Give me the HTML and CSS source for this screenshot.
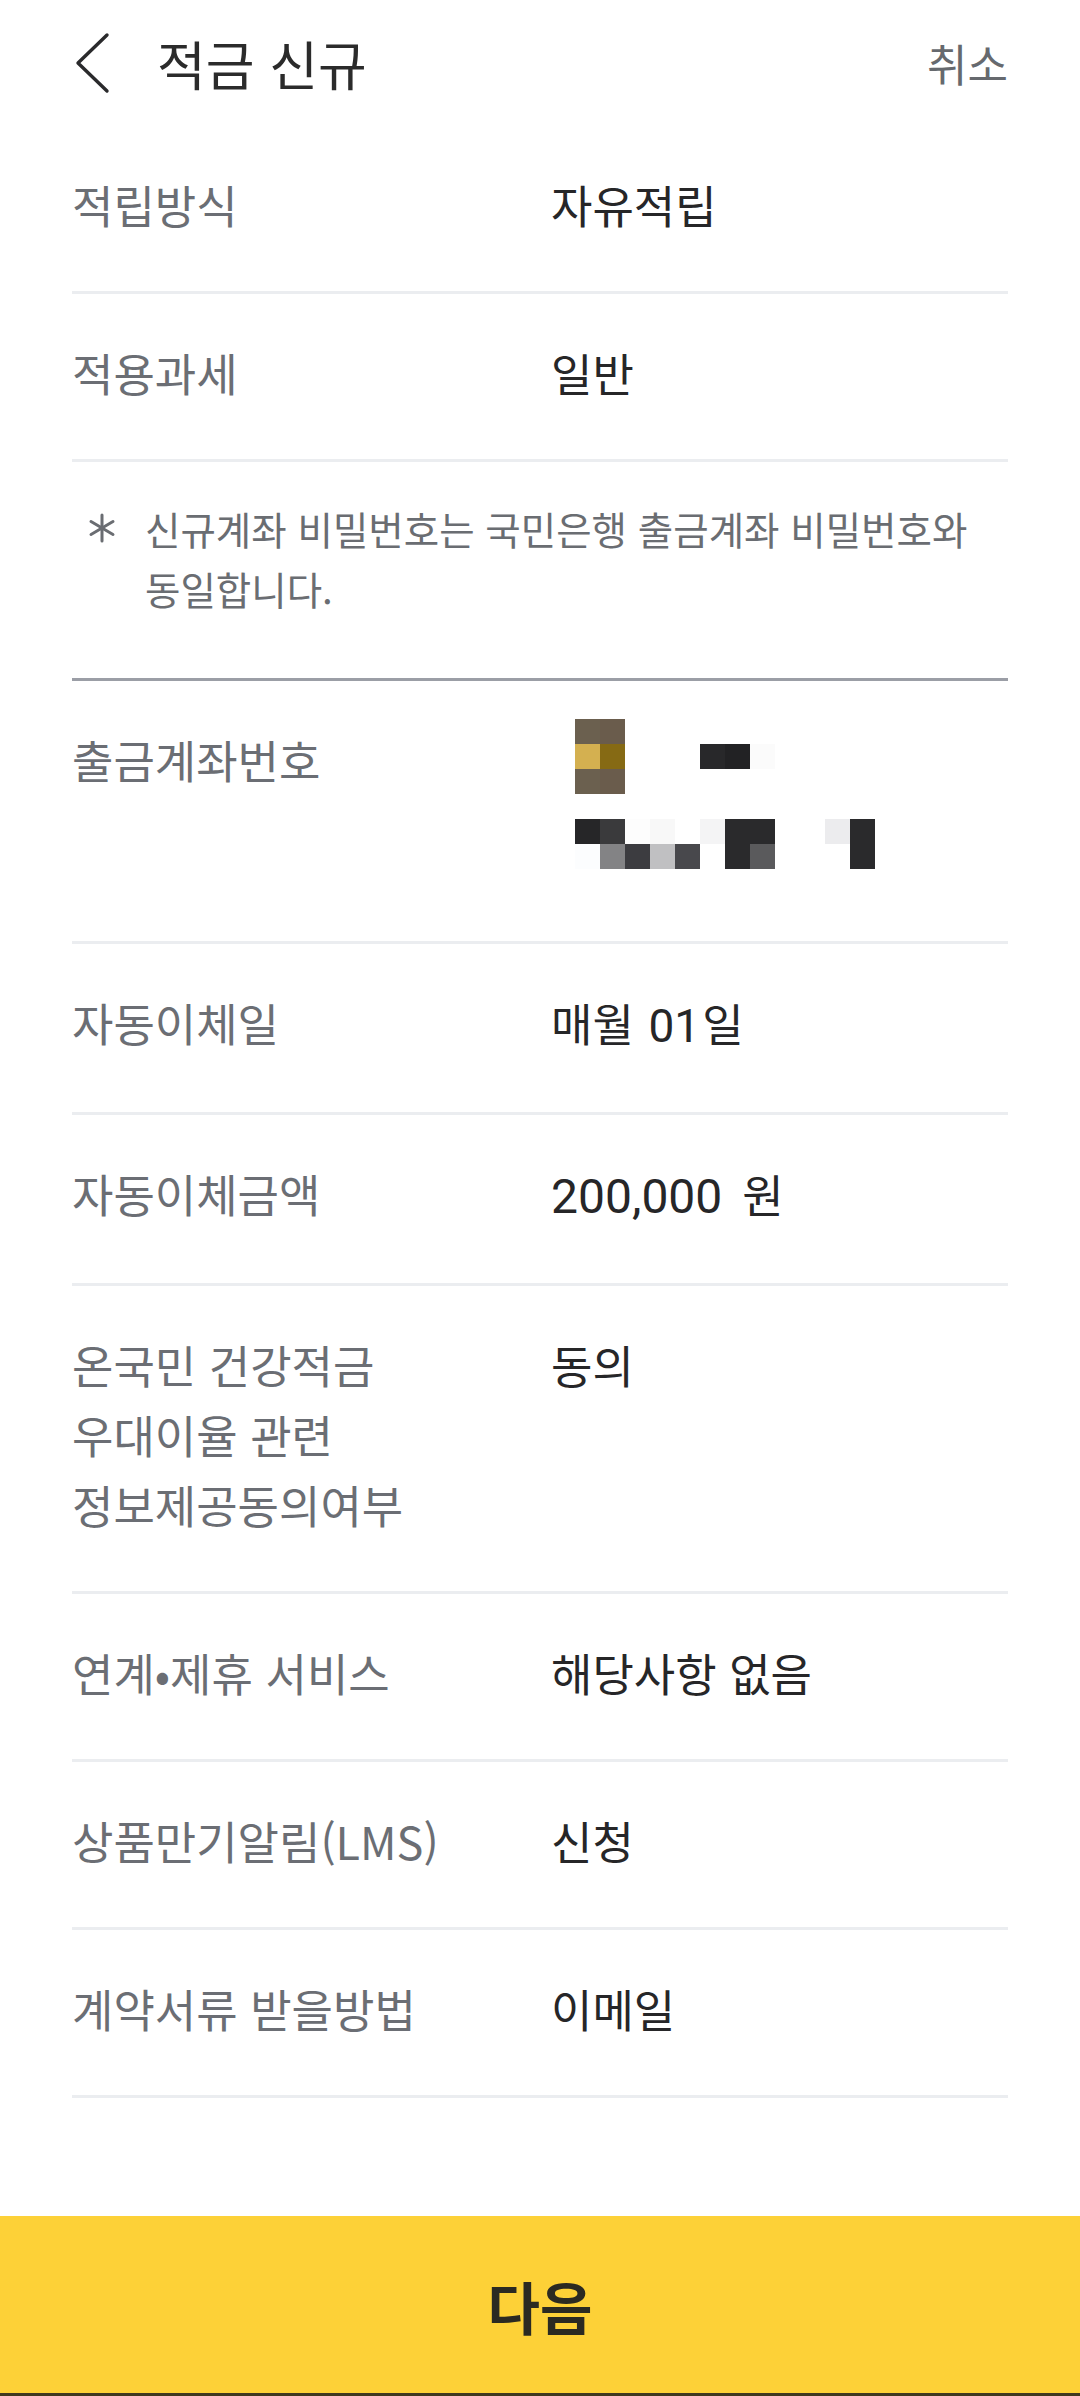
FILE: index.html
```html
<!DOCTYPE html>
<html lang="ko">
<head>
    <meta charset="UTF-8">
    <meta name="viewport" content="width=device-width, initial-scale=1.0">
    <title>적금 신규</title>
    <link rel="stylesheet" href="styles.css">
</head>
<body>
    <div class="screen">
        <!-- 상단 헤더 -->
        <div class="header">
            <svg class="back" width="36" height="62" viewBox="0 0 36 62">
                <polyline points="32,3 3,31 32,59" fill="none" stroke="#2a2a2c" stroke-width="3.4" stroke-linecap="round" stroke-linejoin="round"/>
            </svg>
            <h1 class="title">적금 신규</h1>
            <span class="cancel">취소</span>
        </div>

        <div class="content">
            <div class="row">
                <div class="label">적립방식</div>
                <div class="value">자유적립</div>
            </div>
            <div class="row">
                <div class="label">적용과세</div>
                <div class="value">일반</div>
            </div>

            <!-- 안내 문구 -->
            <div class="notice">
                <span class="star">
                    <svg width="28" height="30" viewBox="0 0 28 30">
                        <g stroke="#6a6d72" stroke-width="3" stroke-linecap="round">
                            <line x1="14" y1="2" x2="14" y2="28"/>
                            <line x1="3" y1="8.5" x2="25" y2="21.5"/>
                            <line x1="3" y1="21.5" x2="25" y2="8.5"/>
                        </g>
                    </svg>
                </span>
                <p>신규계좌 비밀번호는 국민은행 출금계좌 비밀번호와 동일합니다.</p>
            </div>

            <div class="row">
                <div class="label">출금계좌번호</div>
                <div class="value">
                    <!-- 계좌번호 모자이크 -->
                    <div class="mosaic">
                        <div class="mrow"><i style="background:#6b604f"></i><i style="background:#6a5c4c"></i></div>
                        <div class="mrow"><i style="background:#d4b050"></i><i style="background:#866a14"></i><i></i><i></i><i></i><i style="background:#28282a"></i><i style="background:#222224"></i><i style="background:#fbfbfb"></i></div>
                        <div class="mrow"><i style="background:#6b604f"></i><i style="background:#6a5c4c"></i></div>
                        <div class="mrow"></div>
                        <div class="mrow"><i style="background:#262628"></i><i style="background:#3a3a3c"></i><i style="background:#fdfdfd"></i><i style="background:#f8f8f8"></i><i></i><i style="background:#f4f4f5"></i><i style="background:#2a2a2c"></i><i style="background:#2a2a2c"></i><i></i><i></i><i style="background:#ececee"></i><i style="background:#2a2a2c"></i></div>
                        <div class="mrow"><i style="background:#fcfdfe"></i><i style="background:#838385"></i><i style="background:#3c3c40"></i><i style="background:#c0c0c2"></i><i style="background:#48484c"></i><i></i><i style="background:#2a2a2c"></i><i style="background:#5a5a5c"></i><i></i><i></i><i></i><i style="background:#2a2a2c"></i></div>
                    </div>
                </div>
            </div>
            <div class="row">
                <div class="label">자동이체일</div>
                <div class="value">매월 <span class="num">01</span>일</div>
            </div>
            <div class="row">
                <div class="label">자동이체금액</div>
                <div class="value"><span class="amount">200,000</span><span class="won">원</span></div>
            </div>
            <div class="row">
                <div class="label">온국민 건강적금<br>우대이율 관련<br>정보제공동의여부</div>
                <div class="value">동의</div>
            </div>
            <div class="row">
                <div class="label">연계•제휴 서비스</div>
                <div class="value">해당사항 없음</div>
            </div>
            <div class="row">
                <div class="label">상품만기알림(LMS)</div>
                <div class="value">신청</div>
            </div>
            <div class="row">
                <div class="label">계약서류 받을방법</div>
                <div class="value">이메일</div>
            </div>
        </div>

        <button class="next-btn">다음</button>
    </div>
</body>
</html>
```

FILE: styles.css
```css
html, body {
    margin: 0;
    padding: 0;
    background: #fff;
}
body {
    font-family: "Noto Sans CJK KR", "Noto Sans", sans-serif;
    color: #262628;
}
.screen {
    min-height: 100vh;
    display: flex;
    flex-direction: column;
}

/* 헤더 */
.header {
    height: 126px;
    display: flex;
    align-items: center;
    padding: 0 72px;
}
.back {
    margin-left: 3px;
    flex-shrink: 0;
}
.title {
    margin: 0 0 0 46px;
    font-size: 53px;
    font-weight: 400;
    line-height: 1;
    color: #2b2b2b;
    flex: 1;
}
.cancel {
    font-size: 44px;
    line-height: 1;
    color: #66696e;
}

/* 항목 목록 */
.content {
    padding: 0 72px;
}
.row {
    display: flex;
    padding: 44px 0 51px;
    border-bottom: 3px solid #ebedf0;
    font-size: 45px;
    line-height: 70px;
}
.label {
    width: 479px;
    flex-shrink: 0;
    color: #6b6e74;
}
.value {
    color: #262628;
}
.num {
    font-family: Roboto, "Noto Sans", sans-serif;
    font-size: 46px;
    margin: 0 2px;
}
.amount {
    font-family: Roboto, "Noto Sans", sans-serif;
    font-size: 48px;
}
.won {
    margin-left: 20px;
}

/* 안내 문구 */
.notice {
    display: flex;
    padding: 36px 0 60px 16px;
    border-bottom: 3px solid #9b9ea6;
    font-size: 38.5px;
    line-height: 60px;
    color: #6a6d72;
}
.star {
    height: 60px;
    display: flex;
    align-items: center;
    margin-right: 29px;
    flex-shrink: 0;
}
.notice p {
    margin: 0;
    word-break: keep-all;
}

/* 모자이크 */
.mosaic {
    margin: -6px 0 21px 24px;
}
.mrow {
    display: flex;
    height: 25px;
}
.mrow i {
    display: block;
    width: 25px;
    height: 25px;
}

/* 다음 버튼 */
.next-btn {
    margin-top: auto;
    height: 180px;
    width: 100%;
    border: none;
    border-bottom: 3px solid #3f3920;
    background: #fdd137;
    color: #2b2a22;
    font-family: "Noto Sans CJK KR", sans-serif;
    font-size: 57px;
    font-weight: 700;
    cursor: pointer;
}
```
